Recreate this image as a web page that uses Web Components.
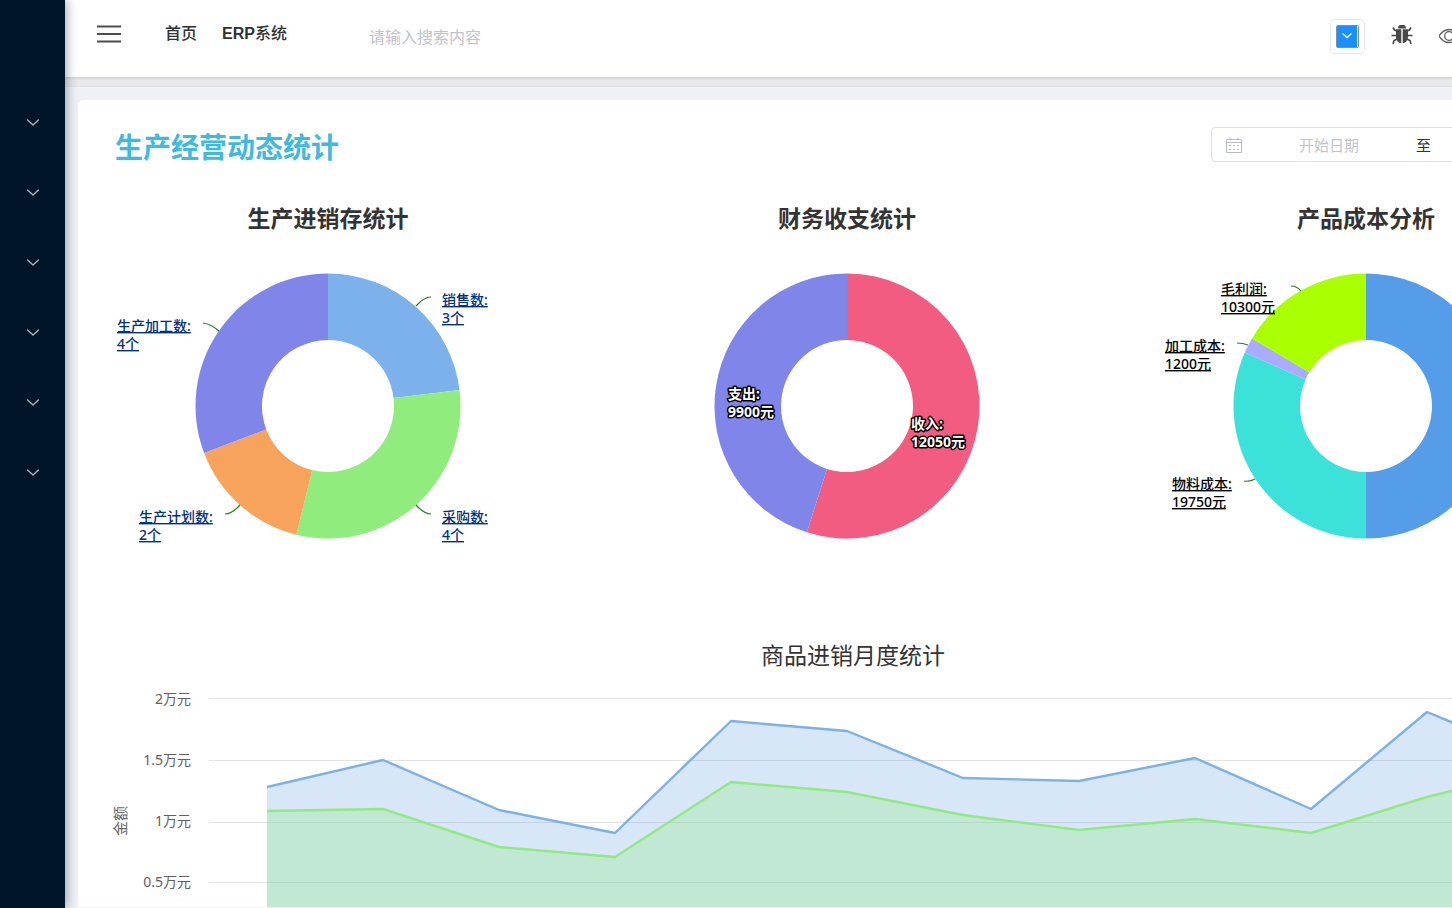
<!DOCTYPE html>
<html lang="zh-CN">
<head>
<meta charset="utf-8">
<title>ERP系统</title>
<style>
  html, body { margin: 0; height: 100%; }
  body { font-family: "Noto Sans", "Noto Sans CJK SC", sans-serif; color: #303133; }
</style>
</head>
<body>
<erp-app></erp-app>

<script>
const define = (name, html, setup) => {
  const template = document.createElement('template');
  template.innerHTML = html;
  customElements.define(name, class extends HTMLElement {
    constructor() {
      super();
      this.attachShadow({ mode: 'open' }).append(template.content.cloneNode(true));
    }
    connectedCallback() { if (setup) setup(this, this.shadowRoot); }
  });
};

/* ---------- sidebar ---------- */
define('side-menu', `
<style>
  :host { display: block; background: #001529; box-shadow: 2px 0 10px rgba(0, 21, 41, .35); }
  nav { display: flex; flex-direction: column; padding-top: 88px; }
  button { height: 70px; border: 0; padding: 0; background: none; color: #a9b2bd; display: grid; place-items: center; cursor: pointer; }
  svg { width: 14px; height: 14px; }
</style>
<nav aria-label="菜单"></nav>`, (host, root) => {
  root.querySelector('nav').innerHTML = Array.from({ length: 6 }, () => `
    <button type="button" aria-label="展开"><svg viewBox="0 0 14 14" fill="none" stroke="currentColor" stroke-width="1.4" stroke-linecap="round" stroke-linejoin="round"><path d="M1.6 4 7 9l5.4-5"/></svg></button>`).join('');
});

/* ---------- header ---------- */
define('top-bar', `
<style>
  :host { display: flex; align-items: center; height: 77px; box-sizing: border-box; padding: 0 168px 10px 32px; background: #fff; box-shadow: 0 1px 3px rgba(0, 21, 41, .15); position: relative; }
  button { border: 0; padding: 0; background: none; color: #4d4d4d; display: grid; place-items: center; cursor: pointer; }
  nav { display: flex; gap: 25px; margin-left: 44px; }
  a { font: 700 16px/24px "Liberation Sans", "Noto Sans CJK SC", sans-serif; color: #303133; text-decoration: none; }
  a:first-child, span { font-weight: 500; }
  input { flex: 1; margin-left: 82px; border: 0; outline: 0; padding: 6px 0 0; background: none; font: 16px/24px "Noto Sans", "Noto Sans CJK SC", sans-serif; }
  input::placeholder { color: #c0c4cc; opacity: 1; }
  .tools { display: flex; align-items: center; gap: 26px; padding-top: 5px; }
  .picker { width: 35px; height: 35px; box-sizing: border-box; border: 1px solid #e4e7ed; border-radius: 5px; }
</style>
<button type="button" aria-label="折叠菜单"><svg width="24" height="18" viewBox="0 0 24 18" stroke="currentColor" stroke-width="2"><path d="M0 1.5h24M0 9h24M0 16.5h24"/></svg></button>
<nav><a href="#">首页</a><a href="#">ERP<span>系统</span></a></nav>
<input type="search" aria-label="搜索" placeholder="请输入搜索内容">
<div class="tools">
  <button type="button" class="picker" aria-label="主题颜色"><svg width="23" height="23" viewBox="0 0 23 23"><rect x=".5" y=".5" width="22" height="22" rx="1" fill="#fff" stroke="#7d8fa5"/><rect x="1" y="1" width="20" height="21" fill="#1890ff"/><path d="m6.5 8.5 4.500 4 4.500-4" fill="none" stroke="#fff" stroke-width="1.4"/></svg></button>
  <button type="button" aria-label="错误日志"><svg width="22" height="22" viewBox="0 2 22 22" fill="none" stroke="#4a4a4a"><path d="M7 4.500a4 4 0 0 1 8 0z" transform="translate(0 1)" fill="#4a4a4a" stroke="none"/><path d="M5 6.300h5.300v14C6.500 19.800 5 17 5 13.500zM17 6.300h-5.300v14C15.500 19.800 17 17 17 13.500z" fill="#4a4a4a" stroke="none"/><path d="M2 4.500 3.500 7 6 8M20 4.500 18.500 7 16 8M.5 12.500H5M17 12.500h4.500M6 16l-3 1.500-1 3.500M16 16l3 1.500 1 3.500" stroke-width="1.6"/></svg></button>
  <button type="button" aria-label="预览"><svg width="22" height="16" viewBox="1 0 22 16" fill="none" stroke="#5a5a5a" stroke-width="1.3"><path d="M1 8c3-4.500 6.300-6.500 10-6.500S18 3.500 21 8c-3 4.500-6.300 6.500-10 6.500S4 12.500 1 8z"/><circle cx="11" cy="8" r="4.300"/></svg></button>
</div>`);

/* ---------- date range ---------- */
define('date-range', `
<style>
  :host { display: flex; align-items: center; width: 395px; height: 35px; box-sizing: border-box; border: 1px solid #dcdfe6; border-radius: 4px; padding-left: 14px; background: #fff; }
  svg { flex: none; }
  input { flex: 1; min-width: 0; border: 0; outline: 0; padding: 0; background: none; text-align: center; font: 15px/22px "Noto Sans", "Noto Sans CJK SC", sans-serif; }
  input::placeholder { color: #c0c4cc; opacity: 1; }
  span { font-size: 15px; line-height: 22px; }
</style>
<svg width="16" height="16" viewBox="0 0 16 16" fill="none" stroke="#b8bcc4"><path d="M.5 2.500h15v13H.5zM.5 5.500h15M4 .5v3M12 .5v3"/><path d="M3 8.500h2m2 0h2m2 0h2M3 12.500h2m2 0h2m2 0h2"/></svg>
<input type="text" aria-label="开始日期" placeholder="开始日期">
<span>至</span>
<input type="text" aria-label="结束日期" placeholder="结束日期">`);

/* ---------- donut ---------- */
const DONUTS = {
  stock: {
    style: 'navy',
    slices: [[3, '#7cb1ec'], [4, '#90ed7d'], [2, '#f7a35c'], [4, '#8085e9']],
    labels: [
      ['销售数:', '3个', 354, 49, 'M328 50Q336 41 343 41'],
      ['采购数:', '4个', 354, 266, 'M328 249Q336 258 343 258'],
      ['生产计划数:', '2个', 51, 266, 'M152 249Q144 258 137 258'],
      ['生产加工数:', '4个', 29, 75, 'M131 75Q123 68 115 67'],
    ],
  },
  finance: {
    style: 'outlined',
    slices: [[12050, '#f15c80'], [9900, '#8085e9']],
    labels: [['收入:', '12050元', 304, 173], ['支出:', '9900元', 121, 143]],
  },
  cost: {
    style: 'black',
    slices: [[31250, '#559de9'], [19750, '#3ce2da'], [1200, '#aaaaff'], [10300, '#aaff00']],
    labels: [
      ['物料成本:', '19750元', 46, 233, 'M129 223Q124 226 118 225'],
      ['加工成本:', '1200元', 39, 95, 'M122 89Q117 87 111 87'],
      ['毛利润:', '10300元', 95, 38, 'M175 35Q171 30 165 30'],
    ],
  },
};

define('donut-chart', `
<style>
  :host { display: flex; flex-direction: column; align-items: center; }
  h3 { margin: 0; font-size: 23px; line-height: 36px; font-weight: 700; color: #333; }
  svg { display: block; margin-top: 20px; overflow: visible; }
  text { font-size: 14px; font-weight: 500; }
  a { text-decoration: none; }
  a text { text-decoration: underline; }
  .navy { fill: #003080; }
  .black { fill: #000; }
  .outlined { fill: #fff; stroke: #000; stroke-width: 3px; stroke-linejoin: round; paint-order: stroke; font-weight: 700; }
</style>
<h3><slot></slot></h3>
<svg width="480" height="300" viewBox="0 0 480 300"></svg>`, (host, root) => {
  const { style, slices, labels } = DONUTS[host.getAttribute('data')];
  const total = slices.reduce((sum, [value]) => sum + value, 0);
  const at = (share, radius) => {
    const angle = share * 2 * Math.PI;
    return `${(240 + radius * Math.sin(angle)).toFixed(2)} ${(150 - radius * Math.cos(angle)).toFixed(2)}`;
  };
  let from = 0;
  const rings = slices.map(([value, color]) => {
    const to = from + value / total;
    const large = to - from > .5 ? 1 : 0;
    const d = `M${at(from, 132.5)}A132.5 132.5 0 ${large} 1 ${at(to, 132.5)}L${at(to, 66)}A66 66 0 ${large} 0 ${at(from, 66)}Z`;
    from = to;
    return `<path d="${d}" fill="${color}"/>`;
  });
  const texts = labels.map(([name, value, x, y, line]) => {
    const text = `<text class="${style}" x="${x}" y="${y}">${name}<tspan x="${x}" dy="18">${value}</tspan></text>`;
    return line ? `<path d="${line}" fill="none" stroke="#2a7a2a" stroke-width="1.2"/><a href="#">${text}</a>` : text;
  });
  root.querySelector('svg').innerHTML = rings.join('') + texts.join('');
});

/* ---------- monthly area chart ---------- */
const SALES = [89, 62, 112, 135, 23, 33, 80, 83, 60, 111, 14, 62];
const PURCHASES = [113, 111, 149, 159, 84, 94, 117, 132, 121, 135, 99, 70];

define('area-chart', `
<style>
  :host { display: block; }
  h3 { margin: 0; padding-left: 12px; text-align: center; font-size: 23px; line-height: 36px; font-weight: 400; color: #333; }
  .body { display: grid; grid-template-columns: 24px 55px 1fr; padding: 25px 5px 0 24px; }
  .axis { align-self: center; justify-self: start; writing-mode: vertical-rl; text-orientation: sideways; transform: rotate(180deg); font-size: 15px; line-height: 16px; color: #666; }
  ol { list-style: none; margin: -9px 0 0; padding: 0; text-align: right; font-size: 14px; color: #606060; }
  li { height: 61px; line-height: 20px; white-space: nowrap; }
  svg { display: block; width: calc(100% - 18px); height: 246px; margin-left: 18px; overflow: visible; }
  path { vector-effect: non-scaling-stroke; }
</style>
<h3><slot></slot></h3>
<div class="body">
  <span class="axis">金额</span>
  <ol><li>2万元</li><li>1.5万元</li><li>1万元</li><li>0.5万元</li></ol>
  <svg viewBox="0 0 1392 246" preserveAspectRatio="none" role="img" aria-label="商品进销月度统计"></svg>
</div>`, (host, root) => {
  const series = (values, color) => {
    const points = values.map((y, i) => `${58 + i * 116} ${y}`).join('L');
    return `<path d="M${points}V246H58Z" fill="${color}" fill-opacity=".3"/><path d="M${points}" fill="none" stroke="${color}" stroke-width="2.4" stroke-linejoin="round"/>`;
  };
  root.querySelector('svg').innerHTML =
    `<path d="M0 .5H1392M0 62.5H1392M0 124.5H1392M0 184.5H1392" stroke="#e2e2e4"/>` +
    series(SALES, '#7cb1e8') + series(PURCHASES, '#90ea80');
});

/* ---------- statistics card ---------- */
define('stat-card', `
<style>
  :host { display: block; background: #fff; border-radius: 6px; padding: 27px 10px 0; }
  header { display: flex; justify-content: space-between; align-items: flex-start; padding-left: 27px; }
  h2 { margin: 0; font-size: 28px; line-height: 40px; font-weight: 700; color: #3eb9e0; }
  .donuts { display: grid; grid-template-columns: repeat(3, 1fr); gap: 39px; padding-top: 33px; }
  area-chart { margin-top: 81px; }
</style>
<header><h2>生产经营动态统计</h2><date-range></date-range></header>
<div class="donuts">
  <donut-chart data="stock">生产进销存统计</donut-chart>
  <donut-chart data="finance">财务收支统计</donut-chart>
  <donut-chart data="cost">产品成本分析</donut-chart>
</div>
<area-chart>商品进销月度统计</area-chart>`);

/* ---------- shell ---------- */
define('erp-app', `
<style>
  :host { display: grid; grid-template-columns: 65px minmax(1564px, 1fr); height: 100vh; overflow: hidden; background: #eff1f5; }
  side-menu { position: relative; z-index: 1; }
  .page { display: flex; flex-direction: column; min-height: 0; }
  top-bar { flex: none; }
  .strip { flex: none; height: 9px; background: #e9e9ec; border-bottom: 1px solid #e0e1e4; }
  main { flex: 1; min-height: 0; overflow: hidden; padding: 13px 13px 0; border-bottom: 1px solid #eff1f5; }
</style>
<side-menu></side-menu>
<div class="page">
  <top-bar></top-bar>
  <div class="strip"></div>
  <main><stat-card></stat-card></main>
</div>`);
</script>
</body>
</html>
